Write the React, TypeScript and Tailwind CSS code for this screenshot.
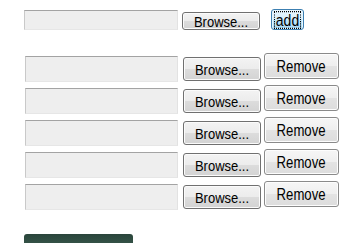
import React from 'react';

const fieldCls =
    'block bg-[#eeeeee] border border-t-[#a3a3a3] border-l-[#c9c9c9] border-r-[#e2e2e2] border-b-[#e6e6e6] outline-none';

const browseCls =
    'flex items-center justify-center rounded-[3px] border border-[#707070] bg-[linear-gradient(#f3f3f3_0%,#ececec_48%,#dcdcdc_52%,#d3d3d3_100%)] text-[13px] leading-none text-black shadow-[inset_0_0_0_1px_#fbfbfb]';

const removeCls =
    'flex items-center justify-center rounded-[3px] border border-[#8a8a8a] bg-[linear-gradient(#f6f6f6_0%,#efefef_48%,#e3e3e3_52%,#dddddd_100%)] text-[14px] leading-none text-black shadow-[inset_0_0_0_1px_#fdfdfd]';

const FileRow = () => (
    <div className="flex items-start">
        <input readOnly className={`${fieldCls} ml-px mt-[3px] w-[153px] h-[26px]`} />
        <button className={`${browseCls} ml-[5px] mt-[4px] w-[78px] h-[24px]`}>
            <span className="inline-block scale-y-[1.18]">Browse...</span>
        </button>
        <button className={`${removeCls} ml-[3px] w-[75px] h-[26px]`}>
            <span className="inline-block -mt-px scale-x-[0.94] scale-y-[1.15]">Remove</span>
        </button>
    </div>
);

const App = () => {
    const rows = [1, 2, 3, 4, 5];

    return (
        <div className="w-[354px] h-[243px] overflow-hidden bg-white pl-6 pt-[9px] font-['Liberation_Sans',Arial,sans-serif]">
            <div className="flex items-start">
                <input readOnly className={`${fieldCls} mt-px w-[154px] h-[20px]`} />
                <button className={`${browseCls} ml-[4px] mt-[3px] w-[78px] h-[18px]`}>
                    <span className="inline-block scale-y-[1.15]">Browse...</span>
                </button>
                <button className="ml-[11px] flex w-[33px] h-[21px] items-center justify-center rounded-[3px] border border-[#3c7fb1] bg-[linear-gradient(#eaf6fd_0%,#d9f0fc_48%,#bee6fd_52%,#a7d9f5_100%)] text-[14px] leading-none text-black shadow-[inset_0_0_0_1px_#e6f4fc]">
                    <span className="inline-block px-px outline-1 outline-dotted outline-black scale-y-[1.12]">add</span>
                </button>
            </div>

            <div className="mt-[23px] flex flex-col gap-[3px]">
                {rows.map((r) => (
                    <FileRow key={r} />
                ))}
            </div>

            <div className="mt-[24px] w-[109px] h-[30px] rounded-t-[3px] bg-[linear-gradient(#2a453b,#3a5a4e_50%,#2c483d)]" />
        </div>
    );
};

export default App;
